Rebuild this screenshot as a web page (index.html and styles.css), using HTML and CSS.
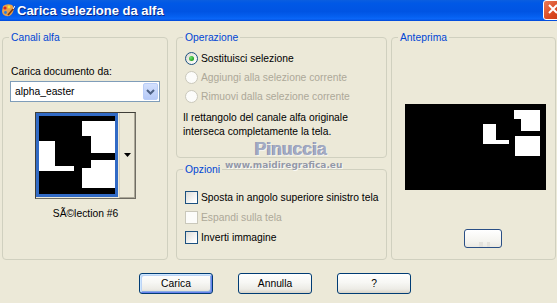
FILE: index.html
```html
<!DOCTYPE html>
<html lang="it">
  <head>
    <meta charset="UTF-8" />
    <title>Carica selezione da alfa</title>
    <link rel="stylesheet" href="styles.css">
  </head>

  <body>
    <div class="window">
      <div class="titlebar">
        <svg class="title-icon" width="14" height="15" viewBox="0 0 14 15">
          <path d="M2 3 Q6 0 11 2 Q14 5 12 9 Q10 14 5 13 Q1 12 1 8 Z" fill="#e8a04a" />
          <circle cx="4" cy="5" r="1.6" fill="#d8261c" />
          <circle cx="8" cy="4" r="1.4" fill="#f6e23a" />
          <circle cx="4.5" cy="9.5" r="1.4" fill="#2a7be0" />
          <path d="M7 12 L13 5" stroke="#7a3b12" stroke-width="1.6" />
          <path d="M12 6 L14 3" stroke="#fff" stroke-width="1" />
        </svg>
        <span class="title">Carica selezione da alfa</span>
        <span class="close">
          <svg width="21" height="20" viewBox="0 0 21 20">
            <path d="M6 5 L14 13 M14 5 L6 13" stroke="#fff" stroke-width="2" />
          </svg>
        </span>
      </div>

      <div class="content">
        <div class="groups">
          <fieldset class="group g-alpha">
            <legend>Canali alfa</legend>
            <div class="field-label">Carica documento da:</div>
            <div class="select">
              <span>alpha_easter</span>
              <span class="select-btn">
                <svg width="15" height="17" viewBox="0 0 15 17">
                  <path d="M4 7 L7.5 10.5 L11 7" fill="none" stroke="#4d6185" stroke-width="2" />
                </svg>
              </span>
            </div>
            <div class="thumb">
              <div class="thumb-img">
                <svg width="76" height="78" viewBox="0 0 76 78">
                  <rect width="76" height="78" fill="#000" />
                  <rect x="43" y="5" width="33" height="15" fill="#fff" />
                  <rect x="52" y="20" width="24" height="17" fill="#fff" />
                  <rect x="0" y="25" width="16" height="30" fill="#fff" />
                  <rect x="16" y="50" width="19" height="5" fill="#fff" />
                  <rect x="52" y="44" width="24" height="28" fill="#fff" />
                  <rect x="43" y="52" width="9" height="20" fill="#fff" />
                </svg>
              </div>
              <div class="thumb-drop">
                <svg width="7" height="4" viewBox="0 0 7 4"><path d="M0 0 H7 L3.5 4 Z" fill="#000" /></svg>
              </div>
            </div>
            <div class="caption">SÃ©lection #6</div>
          </fieldset>

          <div class="mid">
            <fieldset class="group g-op">
              <legend>Operazione</legend>
              <div class="row first">
                <span class="radio checked"></span>
                <span>Sostituisci selezione</span>
              </div>
              <div class="row disabled">
                <span class="radio"></span>
                <span>Aggiungi alla selezione corrente</span>
              </div>
              <div class="row disabled">
                <span class="radio"></span>
                <span>Rimuovi dalla selezione corrente</span>
              </div>
              <p class="note">Il rettangolo del canale alfa originale<br>interseca completamente la tela.</p>
            </fieldset>

            <fieldset class="group g-opt">
              <legend>Opzioni</legend>
              <div class="row first">
                <span class="check"></span>
                <span>Sposta in angolo superiore sinistro tela</span>
              </div>
              <div class="row disabled">
                <span class="check"></span>
                <span>Espandi sulla tela</span>
              </div>
              <div class="row">
                <span class="check"></span>
                <span>Inverti immagine</span>
              </div>
            </fieldset>
          </div>

          <fieldset class="group g-preview">
            <legend>Anteprima</legend>
            <div class="preview">
              <svg width="141" height="86" viewBox="0 0 141 86">
                <rect width="141" height="86" fill="#000" />
                <rect x="78" y="20" width="13" height="20" fill="#fff" />
                <rect x="91" y="36" width="13" height="4" fill="#fff" />
                <rect x="109" y="6" width="26" height="9" fill="#fff" />
                <rect x="116" y="15" width="19" height="12" fill="#fff" />
                <rect x="110" y="32" width="25" height="20" fill="#fff" />
              </svg>
            </div>
            <div class="preview-btn"></div>
          </fieldset>
        </div>

        <div class="buttons">
          <button class="btn default">Carica</button>
          <button class="btn">Annulla</button>
          <button class="btn">?</button>
        </div>
      </div>

      <div class="watermark">
        <span class="wm-name">Pinuccia</span>
        <span class="wm-site">www.maidiregrafica.eu</span>
      </div>
    </div>
  </body>
</html>
```

FILE: styles.css
```css
body {
  margin: 0;
  background-color: #ece9d8;
  font-family: "Liberation Sans", Arial, sans-serif;
  font-size: 10.3px;
  color: #000;
}

.window {
  width: 557px;
  height: 303px;
  position: relative;
  overflow: hidden;
  background-color: #ece9d8;
}

/* title bar */
.titlebar {
  height: 21px;
  display: flex;
  align-items: center;
  background: linear-gradient(
    #0a5ee0 0,
    #0058e6 15%,
    #0054e3 55%,
    #0560f0 80%,
    #0b67f8 90%,
    #0047d6 100%
  );
}

.title-icon {
  margin-left: 1px;
  margin-right: 2px;
}

.title {
  color: #fff;
  font-weight: bold;
  font-size: 13px;
  text-shadow: 1px 1px #0a2a8a;
  margin-top: -1px;
}

.close {
  margin-left: auto;
  margin-right: -7px;
  align-self: flex-start;
  width: 21px;
  height: 20px;
  box-sizing: border-box;
  border: 1px solid #fff;
  border-radius: 3px;
  background: linear-gradient(135deg, #e87a56, #d9461e 60%, #c53a14);
}

.close svg {
  display: block;
  margin: -1px 0 0 -1px;
}

/* group boxes */
.content {
  padding-top: 10px;
}

.groups {
  display: flex;
  height: 229px;
  padding-left: 2px;
}

.group {
  margin: 0;
  padding: 0 0 0 6px;
  border: 1px solid #d0d0bf;
  border-radius: 4px;
  box-sizing: border-box;
  min-width: 0;
}

.group legend {
  padding: 0 2px;
  line-height: 13px;
  color: #0046d5;
}

.g-alpha {
  width: 166px;
}

.mid {
  margin-left: 8px;
  width: 211px;
  display: flex;
  flex-direction: column;
  gap: 5px;
}

.g-op {
  height: 127px;
}

.g-opt {
  height: 97px;
}

.g-preview {
  margin-left: 4px;
  width: 165px;
}

/* canali alfa */
.field-label {
  margin: 21px 0 0 2px;
  line-height: 13px;
}

.select {
  margin: 3px 0 0 1px;
  width: 150px;
  height: 21px;
  box-sizing: border-box;
  border: 1px solid #7f9db9;
  background-color: #fff;
  padding-left: 4px;
  display: flex;
  align-items: center;
}

.select-btn {
  margin-left: auto;
  margin-right: 1px;
  width: 15px;
  height: 17px;
  box-sizing: border-box;
  border: 1px solid #b9cdf8;
  border-radius: 2px;
  background: linear-gradient(#d3e0fd, #b6caf7);
}

.select-btn svg {
  display: block;
  margin: -1px 0 0 -1px;
}

.thumb {
  margin: 10px 0 0 26px;
  width: 101px;
  height: 87px;
  box-sizing: border-box;
  border: 1px solid #3f3e38;
  border-right-color: #6f6d64;
  border-bottom-color: #6f6d64;
  display: flex;
}

.thumb-img {
  width: 82px;
  height: 84px;
  box-sizing: border-box;
  border: 3px solid #316ac5;
  background-color: #000;
}

.thumb-img svg {
  display: block;
}

.thumb-drop {
  flex: 1;
  margin-left: 1px;
  border-left: 1px solid #d6d2c2;
  border-right: 1px solid #aca899;
  border-bottom: 1px solid #aca899;
  background-color: #ece9d8;
  display: flex;
  align-items: center;
  justify-content: center;
}

.caption {
  margin-top: 8px;
  margin-left: 26px;
  width: 101px;
  text-align: center;
  line-height: 13px;
}

/* radios and checkboxes */
.row {
  display: flex;
  align-items: center;
  gap: 3px;
  height: 13px;
  line-height: 13px;
  margin-left: 2px;
  white-space: nowrap;
}

.g-op .row {
  margin-top: 6px;
}

.g-op .row.first {
  margin-top: 8px;
}

.g-opt .row {
  margin-top: 7px;
}

.g-opt .row.first {
  margin-top: 15px;
}

.row.disabled {
  color: #aca899;
}

.radio {
  width: 13px;
  height: 13px;
  box-sizing: border-box;
  border: 1px solid #1c5180;
  border-radius: 50%;
  background: linear-gradient(135deg, #dcd9cf, #fbfbf9 80%);
  display: flex;
  align-items: center;
  justify-content: center;
}

.radio.checked::after {
  content: "";
  width: 5px;
  height: 5px;
  border-radius: 50%;
  background: radial-gradient(circle at 35% 35%, #6fe36f, #21a121 70%);
}

.disabled .radio,
.disabled .check {
  border-color: #cac8bb;
  background: #fcfcfa;
}

.check {
  width: 13px;
  height: 13px;
  box-sizing: border-box;
  border: 1px solid #1c5180;
  background: linear-gradient(135deg, #dcdcd7, #fff 85%);
}

.note {
  margin: 8px 0 0;
  line-height: 14px;
}

/* anteprima */
.preview {
  margin: 60px 0 0 7px;
  width: 141px;
  height: 86px;
}

.preview svg {
  display: block;
}

.preview-btn {
  margin: 39px 0 0 66px;
  width: 38px;
  height: 19px;
  box-sizing: border-box;
  border: 1px solid #2a4f85;
  border-radius: 3px;
  background:
    linear-gradient(90deg, transparent 40%, #e4e2dc 40%, #e4e2dc 50%, transparent 50%, transparent 60%, #e4e2dc 60%, #e4e2dc 70%, transparent 70%) bottom / 100% 5px no-repeat,
    linear-gradient(#fff, #f4f3ee 70%, #ebe9e1);
}

/* bottom buttons */
.buttons {
  margin-top: 13px;
  padding-left: 139px;
  display: flex;
  gap: 25px;
}

.btn {
  width: 74px;
  height: 21px;
  padding: 0;
  border: 1px solid #003c74;
  border-radius: 3px;
  background: linear-gradient(#fff, #f7f7f4 45%, #ecebe5 80%, #d8d3c8);
  font-family: inherit;
  font-size: 10.3px;
  color: #000;
}

.btn.default {
  box-shadow: inset 1px 1px 0 #cee7ff, inset -1px -1px 0 #6982ee, inset 2px 2px 0 #bcd4f6, inset -2px -2px 0 #89ade4;
}

/* watermark over the dialog */
.watermark {
  position: absolute;
  left: 225px;
  top: 140px;
  width: 130px;
  display: flex;
  flex-direction: column;
  align-items: flex-start;
}

.wm-name {
  margin-left: 30px;
  font-size: 17.5px;
  font-weight: bold;
  line-height: 18px;
  color: #a2aac2;
  text-shadow: 1px 1px 0 #f4f4f0, -1px 0 0 #8a93ad;
}

.wm-site {
  margin-top: 2px;
  font-family: "DejaVu Sans", sans-serif;
  font-size: 9px;
  font-weight: bold;
  line-height: 11px;
  color: #9499a8;
  text-shadow: 1px 1px 0 #fafaf6;
}
```
